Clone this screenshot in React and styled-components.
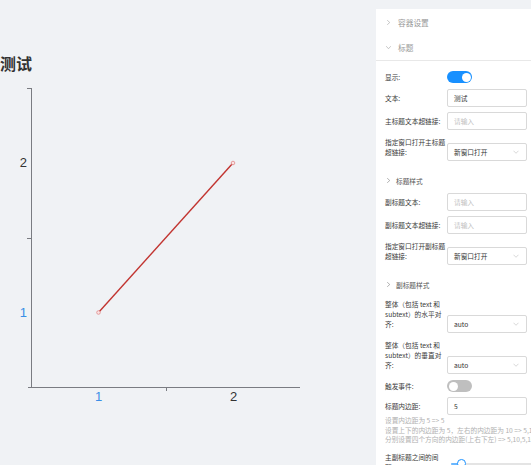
import React from 'react';
import styled, { createGlobalStyle } from 'styled-components';

const GlobalStyle = createGlobalStyle`
  html, body { margin: 0; padding: 0; }
  body {
    background: #f0f2f5;
    font-family: "Noto Sans CJK SC", "Noto Sans", sans-serif;
    overflow: hidden;
  }
`;

const Page = styled.div`
  display: flex;
  width: 531px;
  height: 465px;
  overflow: hidden;
  background: #f0f2f5;
`;

const ChartArea = styled.div`
  flex: 0 0 376px;
  height: 465px;
`;

const Panel = styled.div`
  flex: 1;
  min-width: 0;
  margin-top: 9px;
  background: #fff;
  overflow: hidden;
`;

const CollapseHeader = styled.div`
  display: flex;
  align-items: center;
  gap: 7px;
  height: ${(p) => p.$h}px;
  padding-left: 10px;
  color: #999;
  font-size: 7.7px;
  border-bottom: ${(p) => (p.$divider ? '1px solid #e8e8e8' : 'none')};
`;

const Body = styled.div`
  padding: 9px 4px 0 9px;
`;

const SubHeader = styled.div`
  display: flex;
  align-items: center;
  gap: 5px;
  height: 25px;
  padding: 2px 0 0 1px;
  color: #555;
  font-size: 6.7px;
`;

const FormRow = styled.div`
  display: flex;
  align-items: flex-end;
  margin-bottom: ${(p) => (p.$mb !== undefined ? p.$mb : 5)}px;
`;

const Label = styled.div`
  flex: 0 0 62px;
  padding: 2px 0 ${(p) => (p.$pb !== undefined ? p.$pb : 4)}px;
  font-size: 6.7px;
  line-height: 10px;
  color: #3a3a3a;
  white-space: nowrap;
`;

const Control = styled.div`
  flex: 0 0 80px;
  width: 80px;
`;

const InputBox = styled.div`
  display: flex;
  align-items: center;
  justify-content: space-between;
  box-sizing: border-box;
  height: 18px;
  padding: 0 7px 0 6px;
  border: 1px solid #d9d9d9;
  border-radius: 2px;
  font-size: 6.7px;
  color: ${(p) => (p.$placeholder ? '#bfbfbf' : '#333')};
  background: #fff;
`;

const Switch = styled.div`
  display: flex;
  justify-content: ${(p) => (p.$on ? 'flex-end' : 'flex-start')};
  align-items: center;
  box-sizing: border-box;
  width: 25px;
  height: 12px;
  padding: 0 1.5px;
  border-radius: 6px;
  background: ${(p) => (p.$on ? '#1890ff' : '#bfbfbf')};
`;

const Knob = styled.div`
  width: 9px;
  height: 9px;
  border-radius: 50%;
  background: #fff;
`;

const Help = styled.div`
  font-size: 6.7px;
  line-height: 9.6px;
  color: #b0b0b0;
  white-space: nowrap;
  margin-bottom: 5px;
`;

const SliderBox = styled.div`
  position: relative;
  height: 18px;
`;

const Rail = styled.div`
  position: absolute;
  top: 5px;
  left: 4px;
  right: -10px;
  height: 2px;
  border-radius: 1px;
  background: #e4e4e4;
`;

const Track = styled.div`
  position: absolute;
  top: 5px;
  left: 4px;
  height: 2px;
  border-radius: 1px;
  background: #69b7ff;
`;

const Handle = styled.div`
  position: absolute;
  top: 1.6px;
  box-sizing: border-box;
  width: 8.8px;
  height: 8.8px;
  border-radius: 50%;
  border: 1.6px solid #1890ff;
  background: #fff;
`;

const Chevron = ({ dir = 'right', size = 5, color = '#aaa' }) => (
  <svg width={size} height={size} viewBox="0 0 10 10" style={{ flexShrink: 0 }}>
    <path
      d={dir === 'right' ? 'M3 1 L7.5 5 L3 9' : 'M1 3 L5 7.5 L9 3'}
      fill="none"
      stroke={color}
      strokeWidth="1.3"
      strokeLinecap="round"
      strokeLinejoin="round"
    />
  </svg>
);

const SelectArrow = () => (
  <svg width="6" height="4" viewBox="0 0 12 8">
    <path d="M1 1.5 L6 6.5 L11 1.5" fill="none" stroke="#bfbfbf" strokeWidth="1.2" />
  </svg>
);

const Lines = ({ lines }) =>
  lines.map((l, i) => (
    <React.Fragment key={i}>
      {i > 0 && <br />}
      {l}
    </React.Fragment>
  ));

const InputRow = ({ label, value, placeholder }) => (
  <FormRow>
    <Label>
      <Lines lines={label} />
    </Label>
    <Control>
      <InputBox $placeholder={!value}>{value || placeholder}</InputBox>
    </Control>
  </FormRow>
);

const SelectRow = ({ label, value }) => (
  <FormRow>
    <Label>
      <Lines lines={label} />
    </Label>
    <Control>
      <InputBox>
        <span>{value}</span>
        <SelectArrow />
      </InputBox>
    </Control>
  </FormRow>
);

const SwitchRow = ({ label, on, mb }) => (
  <FormRow $mb={mb}>
    <Label $pb={1}>{label}</Label>
    <Control>
      <Switch $on={on}>
        <Knob />
      </Switch>
    </Control>
  </FormRow>
);

const Chart = () => {
  const axis = '#7a7c82';
  const blue = '#3a8ee6';
  return (
    <svg width="376" height="465" viewBox="0 0 376 465">
      <text
        x="0"
        y="70"
        fontSize="16"
        fontWeight="bold"
        fill="#333"
        fontFamily='"Noto Sans CJK SC", sans-serif'
      >
        测试
      </text>
      <g stroke={axis} strokeWidth="1" shapeRendering="crispEdges">
        <line x1="31.5" y1="88" x2="31.5" y2="388" />
        <line x1="27" y1="88.5" x2="31.5" y2="88.5" />
        <line x1="27" y1="238.5" x2="31.5" y2="238.5" />
        <line x1="28" y1="387.5" x2="300" y2="387.5" />
        <line x1="166.5" y1="387.5" x2="166.5" y2="391" />
      </g>
      <g fontFamily='"Liberation Sans", Arial, sans-serif' fontSize="13">
        <text x="27" y="167" textAnchor="end" fill="#333">2</text>
        <text x="27" y="317" textAnchor="end" fill={blue}>1</text>
        <text x="98.5" y="401" textAnchor="middle" fill={blue}>1</text>
        <text x="233.5" y="401" textAnchor="middle" fill="#333">2</text>
      </g>
      <line x1="98.5" y1="312.5" x2="233" y2="163" stroke="#c23531" strokeWidth="1.4" />
      <circle cx="98.5" cy="312.5" r="1.8" fill="#fbe3e3" stroke="#e08a8a" strokeWidth="0.8" />
      <circle cx="233" cy="163" r="1.8" fill="#fbe3e3" stroke="#e08a8a" strokeWidth="0.8" />
    </svg>
  );
};

export default function App() {
  return (
    <>
      <GlobalStyle />
      <Page>
        <ChartArea>
          <Chart />
        </ChartArea>
        <Panel>
          <CollapseHeader $h={26}>
            <Chevron dir="right" />
            <span>容器设置</span>
          </CollapseHeader>
          <CollapseHeader $h={25} $divider>
            <Chevron dir="down" />
            <span>标题</span>
          </CollapseHeader>
          <Body>
            <SwitchRow label="显示:" on mb={6} />
            <InputRow label={['文本:']} value="测试" />
            <InputRow label={['主标题文本超链接:']} placeholder="请输入" />
            <SelectRow label={['指定窗口打开主标题', '超链接:']} value="新窗口打开" />
            <SubHeader>
              <Chevron dir="right" size={5} color="#888" />
              <span>标题样式</span>
            </SubHeader>
            <InputRow label={['副标题文本:']} placeholder="请输入" />
            <InputRow label={['副标题文本超链接:']} placeholder="请输入" />
            <SelectRow label={['指定窗口打开副标题', '超链接:']} value="新窗口打开" />
            <SubHeader>
              <Chevron dir="right" size={5} color="#888" />
              <span>副标题样式</span>
            </SubHeader>
            <SelectRow label={['整体（包括 text 和', 'subtext）的水平对', '齐:']} value="auto" />
            <SelectRow label={['整体（包括 text 和', 'subtext）的垂直对', '齐:']} value="auto" />
            <SwitchRow label="触发事件:" on={false} />
            <FormRow $mb={1}>
              <Label>标题内边距:</Label>
              <Control>
                <InputBox>5</InputBox>
              </Control>
            </FormRow>
            <Help>
              设置内边距为 5 =&gt; 5
              <br />
              设置上下的内边距为 5，左右的内边距为 10 =&gt; 5,10
              <br />
              分别设置四个方向的内边距(上右下左) =&gt; 5,10,5,10
            </Help>
            <FormRow>
              <Label>
                主副标题之间的间
                <br />
                距:
              </Label>
              <Control>
                <SliderBox>
                  <Rail />
                  <Track style={{ width: 8 }} />
                  <Handle style={{ left: 10.3 }} />
                </SliderBox>
              </Control>
            </FormRow>
          </Body>
        </Panel>
      </Page>
    </>
  );
}
